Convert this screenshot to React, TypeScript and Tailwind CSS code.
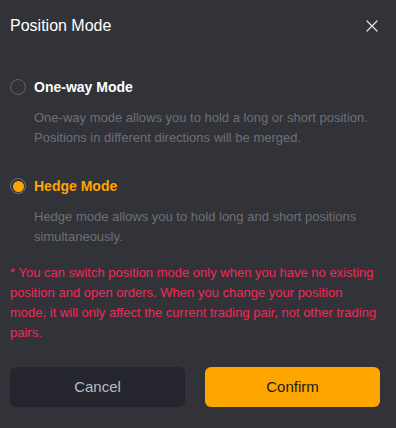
import React, { useState } from 'react'

type Mode = 'oneway' | 'hedge'

const options: { id: Mode; title: string; desc: string }[] = [
  {
    id: 'oneway',
    title: 'One-way Mode',
    desc: 'One-way mode allows you to hold a long or short position. Positions in different directions will be merged.'
  },
  {
    id: 'hedge',
    title: 'Hedge Mode',
    desc: 'Hedge mode allows you to hold long and short positions simultaneously.'
  }
]

const Radio = ({ checked }: { checked: boolean }) => (
  <span
    className={`flex h-4 w-4 shrink-0 items-center justify-center rounded-full border ${
      checked ? 'border-[#6e7078]' : 'border-[#63656c]'
    }`}
  >
    {checked && <span className="h-[11px] w-[11px] rounded-full bg-[#ffa500]" />}
  </span>
)

export default function App() {
  const [mode, setMode] = useState<Mode>('hedge')

  return (
    <div
      className="flex min-h-[428px] w-[396px] flex-col bg-[#323338] pl-[10px] pr-4 pt-[14px]"
      style={{ fontFamily: '"Liberation Sans", Arial, sans-serif' }}
    >
      {/* header */}
      <div className="flex h-6 items-center justify-between">
        <h1 className="text-[16px] leading-6 text-white">Position Mode</h1>
        <button className="flex h-4 w-4 items-center justify-center text-[#e6e7ea]">
          <svg width="12" height="12" viewBox="0 0 12 12" fill="none">
            <path d="M1 1L11 11M11 1L1 11" stroke="currentColor" strokeWidth="1.2" strokeLinecap="round" />
          </svg>
        </button>
      </div>

      {/* options */}
      <div className="mt-[39px] flex flex-col gap-[28px]">
        {options.map((o) => {
          const active = mode === o.id
          return (
            <div key={o.id} className="cursor-pointer" onClick={() => setMode(o.id)}>
              <div className="flex h-5 items-center gap-2">
                <Radio checked={active} />
                <span
                  className={`text-[14px] font-bold leading-5 ${active ? 'text-[#ffa500]' : 'text-white'}`}
                >
                  {o.title}
                </span>
              </div>
              <p className="mt-[11px] pl-6 pr-3 text-[13px] leading-5 text-[#6d6f76]">{o.desc}</p>
            </div>
          )
        })}
      </div>

      {/* warning */}
      <p className="mt-4 text-[13px] leading-5 text-[#f0295a]">
        * You can switch position mode only when you have no existing position and open orders. When you
        change your position mode, it will only affect the current trading pair, not other trading pairs.
      </p>

      {/* actions */}
      <div className="mt-6 flex gap-5">
        <button className="h-10 flex-1 rounded-md bg-[#25262d] text-[15px] text-[#b9bbc1]">Cancel</button>
        <button className="h-10 flex-1 rounded-md bg-[#ffa500] text-[15px] text-[#1b1b1e]">Confirm</button>
      </div>
    </div>
  )
}
